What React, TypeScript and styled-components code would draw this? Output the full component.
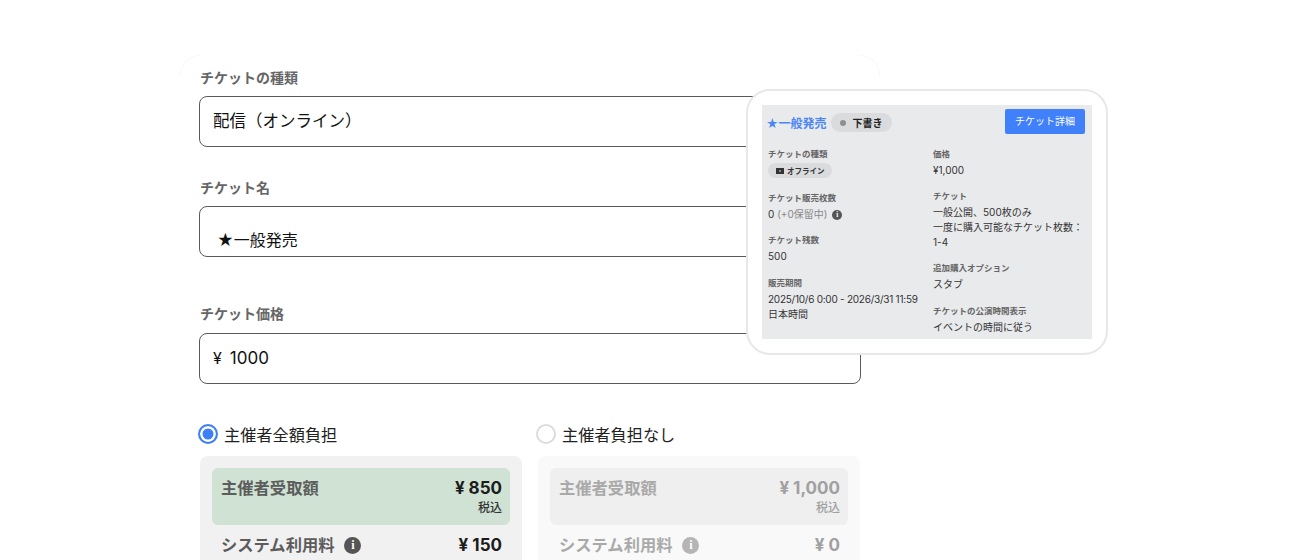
import styled, { createGlobalStyle } from 'styled-components';

const GlobalStyle = createGlobalStyle`
  html, body {
    margin: 0;
    padding: 0;
    background: #fff;
    font-family: 'Inter', 'Noto Sans CJK JP', sans-serif;
  }
`;

const Page = styled.div`
  position: relative;
  width: 1290px;
  height: 560px;
  overflow: hidden;
  padding: 55px 0 0 180px;
  box-sizing: border-box;
`;

const FormCard = styled.div`
  position: relative;
  width: 700px;
  box-sizing: border-box;
  padding: 13px 19px 0 19px;

  &::before,
  &::after {
    content: '';
    position: absolute;
    top: 0;
    width: 20px;
    height: 20px;
    border-top: 1px solid #f8f8f8;
  }

  &::before {
    left: 0;
    border-left: 1px solid #f8f8f8;
    border-top-left-radius: 20px;
  }

  &::after {
    right: 0;
    border-right: 1px solid #f8f8f8;
    border-top-right-radius: 20px;
  }
`;

const Field = styled.div<{ $gap: number }>`
  margin-bottom: ${(p) => p.$gap}px;
`;

const Label = styled.div<{ $gap?: number }>`
  font-size: 14px;
  line-height: 20px;
  font-weight: 700;
  color: #666;
  margin: 0 0 ${(p) => p.$gap ?? 8}px 1px;
`;

const Input = styled.div<{ $inset?: number; $drop?: number; $lift?: number; $size?: number }>`
  height: 51px;
  box-sizing: border-box;
  border: 1px solid #5a5a5a;
  border-radius: 8px;
  padding: ${(p) => p.$drop ?? 0}px 0 ${(p) => p.$lift ?? 0}px ${(p) => p.$inset ?? 13}px;
  display: flex;
  align-items: center;
  gap: 8px;
  font-size: ${(p) => p.$size ?? 16}px;
  color: #111;
`;

const PriceValue = styled.span`
  font-size: 17px;
`;

const FeeColumns = styled.div`
  display: grid;
  grid-template-columns: 322px 322px;
  column-gap: 16px;
  margin-left: 1px;
`;

const RadioRow = styled.div`
  display: flex;
  align-items: center;
  gap: 6px;
  height: 22px;
  font-size: 16.2px;
  color: #222;
  margin: -1px 0 11px -2px;
`;

const Radio = styled.span<{ $on?: boolean }>`
  width: 20px;
  height: 20px;
  box-sizing: border-box;
  border-radius: 50%;
  border: ${(p) => (p.$on ? '2.5px solid #3f7ff5' : '2px solid #dcdcdc')};
  background: ${(p) => (p.$on ? '#3f7ff5' : '#fff')};
  box-shadow: ${(p) => (p.$on ? 'inset 0 0 0 2.5px #fff' : 'none')};
`;

const FeePanel = styled.div<{ $muted?: boolean }>`
  background: ${(p) => (p.$muted ? '#f9f9f9' : '#f1f1f1')};
  border-radius: 8px;
  padding: 12px 12px 0;
  height: 160px;
`;

const Receipt = styled.div<{ $muted?: boolean }>`
  height: 57px;
  box-sizing: border-box;
  border-radius: 6px;
  background: ${(p) => (p.$muted ? '#efefef' : '#cfe2d3')};
  padding: 8px 8px 0 9px;
  display: flex;
  justify-content: space-between;
`;

const FeeName = styled.span<{ $muted?: boolean }>`
  font-size: 16.3px;
  line-height: 24px;
  font-weight: 700;
  color: ${(p) => (p.$muted ? '#a9a9a9' : '#5c5c5c')};
`;

const Amount = styled.div<{ $muted?: boolean }>`
  text-align: right;
  font-size: 17px;
  line-height: 24px;
  font-weight: 700;
  color: ${(p) => (p.$muted ? '#a0a0a0' : '#1c1c1c')};
`;

const Tax = styled.div<{ $muted?: boolean }>`
  font-size: 12px;
  line-height: 16px;
  font-weight: 500;
  color: ${(p) => (p.$muted ? '#a0a0a0' : '#333')};
`;

const SystemRow = styled.div`
  display: flex;
  justify-content: space-between;
  align-items: center;
  padding: 8px 8px 0 9px;
`;

const FeeNameGroup = styled.div`
  display: flex;
  align-items: center;
  gap: 10px;
`;

const InfoDot = styled.span<{ $size: number; $color: string }>`
  width: ${(p) => p.$size}px;
  height: ${(p) => p.$size}px;
  border-radius: 50%;
  background: ${(p) => p.$color};
  color: #fff;
  font-family: 'Liberation Serif', serif;
  font-weight: 700;
  font-size: ${(p) => p.$size * 0.72}px;
  line-height: ${(p) => p.$size}px;
  text-align: center;
  display: inline-block;
  flex: none;
`;

const Popup = styled.div`
  position: absolute;
  left: 746px;
  top: 89px;
  width: 362px;
  height: 266px;
  box-sizing: border-box;
  background: #fff;
  border: 2px solid #e8e8e8;
  border-radius: 24px;
  padding: 14px;
`;

const PopupInner = styled.div`
  height: 234px;
  background: #e9eaec;
  padding: 4px 7px 0 6px;
  box-sizing: border-box;
`;

const PopupHead = styled.div`
  display: flex;
  align-items: center;
  height: 25px;
  margin-bottom: 14px;
`;

const TicketTitle = styled.span`
  font-size: 12px;
  font-weight: 700;
  color: #4a86f5;
  margin: 2px 4px 0 -2px;
`;

const StatusPill = styled.span`
  display: flex;
  align-items: center;
  gap: 7px;
  height: 19px;
  width: 61px;
  margin-top: 2px;
  padding-left: 9px;
  box-sizing: border-box;
  border-radius: 10px;
  background: #dadbdd;
  font-size: 10px;
  font-weight: 700;
  color: #222;
`;

const StatusDot = styled.span`
  width: 6px;
  height: 6px;
  border-radius: 50%;
  background: #8f8f8f;
`;

const DetailButton = styled.span`
  margin-left: auto;
  width: 80px;
  height: 25px;
  padding-bottom: 3px;
  box-sizing: border-box;
  border-radius: 2px;
  background: #4080fb;
  color: #fff;
  font-size: 10px;
  display: flex;
  align-items: center;
  justify-content: center;
`;

const PopupGrid = styled.div`
  display: grid;
  grid-template-columns: 165px 1fr;
`;

const PopupColumn = styled.div`
  display: flex;
  flex-direction: column;
`;

const Item = styled.div<{ $gap: number }>`
  margin-bottom: ${(p) => p.$gap}px;
`;

const ItemLabel = styled.div`
  font-size: 8.5px;
  line-height: 13px;
  font-weight: 700;
  color: #666;
  margin-bottom: 2px;
`;

const ItemValue = styled.div`
  font-size: 10px;
  line-height: 15px;
  color: #333;
  white-space: nowrap;
  display: flex;
  align-items: center;
  gap: 5px;
`;

const PeriodValue = styled(ItemValue)`
  letter-spacing: -0.25px;
`;

const ItemValueMuted = styled.span`
  color: #888;
`;

const KindPill = styled.span`
  display: flex;
  width: fit-content;
  align-items: center;
  gap: 3px;
  height: 15px;
  padding: 0 7px 0 8px;
  border-radius: 8px;
  background: #dadbdd;
  font-size: 7.5px;
  font-weight: 700;
  color: #333;
`;

export default function App() {
  return (
    <>
      <GlobalStyle />
      <Page>
        <FormCard>
          <Field $gap={31}>
            <Label>チケットの種類</Label>
            <Input $lift={4} $size={16.5}>配信（オンライン）</Input>
          </Field>
          <Field $gap={47}>
            <Label>チケット名</Label>
            <Input $inset={17} $drop={14}>★一般発売</Input>
          </Field>
          <Field $gap={40}>
            <Label $gap={9}>チケット価格</Label>
            <Input $lift={2}>
              ¥<PriceValue>1000</PriceValue>
            </Input>
          </Field>
          <FeeColumns>
            <div>
              <RadioRow>
                <Radio $on />
                主催者全額負担
              </RadioRow>
              <FeePanel>
                <Receipt>
                  <FeeName>主催者受取額</FeeName>
                  <Amount>
                    ¥ 850
                    <Tax>税込</Tax>
                  </Amount>
                </Receipt>
                <SystemRow>
                  <FeeNameGroup>
                    <FeeName>システム利用料</FeeName>
                    <InfoDot $size={17} $color="#555">i</InfoDot>
                  </FeeNameGroup>
                  <Amount>¥ 150</Amount>
                </SystemRow>
              </FeePanel>
            </div>
            <div>
              <RadioRow>
                <Radio />
                主催者負担なし
              </RadioRow>
              <FeePanel $muted>
                <Receipt $muted>
                  <FeeName $muted>主催者受取額</FeeName>
                  <Amount $muted>
                    ¥ 1,000
                    <Tax $muted>税込</Tax>
                  </Amount>
                </Receipt>
                <SystemRow>
                  <FeeNameGroup>
                    <FeeName $muted>システム利用料</FeeName>
                    <InfoDot $size={17} $color="#b5b5b5">i</InfoDot>
                  </FeeNameGroup>
                  <Amount $muted>¥ 0</Amount>
                </SystemRow>
              </FeePanel>
            </div>
          </FeeColumns>
        </FormCard>
        <Popup>
          <PopupInner>
            <PopupHead>
              <TicketTitle>★一般発売</TicketTitle>
              <StatusPill>
                <StatusDot />
                下書き
              </StatusPill>
              <DetailButton>チケット詳細</DetailButton>
            </PopupHead>
            <PopupGrid>
              <PopupColumn>
                <Item $gap={14}>
                  <ItemLabel>チケットの種類</ItemLabel>
                  <KindPill>
                    <svg width="8" height="6" viewBox="0 0 8 6">
                      <path d="M0 0h8v6H0z" fill="#333" />
                      <path d="M3 2h2v2H3z" fill="#8a8a8a" />
                    </svg>
                    オフライン
                  </KindPill>
                </Item>
                <Item $gap={12}>
                  <ItemLabel>チケット販売枚数</ItemLabel>
                  <ItemValue>
                    <span>
                      0 <ItemValueMuted>(+0保留中)</ItemValueMuted>
                    </span>
                    <InfoDot $size={10} $color="#555">i</InfoDot>
                  </ItemValue>
                </Item>
                <Item $gap={13}>
                  <ItemLabel>チケット残数</ItemLabel>
                  <ItemValue>500</ItemValue>
                </Item>
                <Item $gap={0}>
                  <ItemLabel>販売期間</ItemLabel>
                  <PeriodValue>2025/10/6 0:00 - 2026/3/31 11:59</PeriodValue>
                  <ItemValue>日本時間</ItemValue>
                </Item>
              </PopupColumn>
              <PopupColumn>
                <Item $gap={12}>
                  <ItemLabel>価格</ItemLabel>
                  <ItemValue>¥1,000</ItemValue>
                </Item>
                <Item $gap={12}>
                  <ItemLabel>チケット</ItemLabel>
                  <ItemValue>一般公開、500枚のみ</ItemValue>
                  <ItemValue>一度に購入可能なチケット枚数：</ItemValue>
                  <ItemValue>1-4</ItemValue>
                </Item>
                <Item $gap={13}>
                  <ItemLabel>追加購入オプション</ItemLabel>
                  <ItemValue>スタブ</ItemValue>
                </Item>
                <Item $gap={0}>
                  <ItemLabel>チケットの公演時間表示</ItemLabel>
                  <ItemValue>イベントの時間に従う</ItemValue>
                </Item>
              </PopupColumn>
            </PopupGrid>
          </PopupInner>
        </Popup>
      </Page>
    </>
  );
}
